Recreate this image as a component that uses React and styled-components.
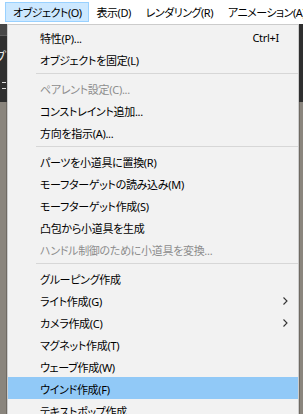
import React from 'react';
import styled, { createGlobalStyle } from 'styled-components';

const GlobalStyle = createGlobalStyle`
  html, body {
    margin: 0;
    padding: 0;
    background: #333333;
    overflow: hidden;
  }
`;

const Screen = styled.div`
  width: 303px;
  height: 414px;
  display: flex;
  flex-direction: column;
  overflow: hidden;
  font-family: "Noto Sans", "Noto Sans CJK JP", sans-serif;
  font-feature-settings: "palt" 1;
  font-size: 11px;
  letter-spacing: -0.3px;
  color: #000000;
`;

const MenuBar = styled.div`
  height: 24px;
  flex: none;
  display: flex;
  align-items: center;
  padding-left: 5px;
  background: #ffffff;
  white-space: nowrap;
  overflow: hidden;
  letter-spacing: -0.5px;
`;

const MenuTitle = styled.div`
  height: 20px;
  box-sizing: border-box;
  display: flex;
  align-items: center;
  padding: 0 6px 0 7px;
  border: 1px solid ${(p) => (p.$open ? '#99d1ff' : 'transparent')};
  background: ${(p) => (p.$open ? '#cce8ff' : 'transparent')};
`;

const Workspace = styled.div`
  flex: 1;
  display: flex;
  min-height: 0;
`;

const SideStrip = styled.div`
  width: ${(p) => p.$width}px;
  flex: none;
  display: flex;
  flex-direction: column;
  overflow: hidden;
`;

const DarkPane = styled.div`
  height: 78px;
  flex: none;
  background: #2f2f2f;
  display: flex;
  flex-direction: column;
  overflow: hidden;
`;

const TabBlock = styled.div`
  height: 11px;
  flex: none;
  background: #474747;
  border-bottom: 1px solid #5e5e5e;
`;

const ClippedGlyph = styled.div`
  margin-top: 12px;
  margin-left: -6px;
  color: #e8e8e8;
  font-size: 13px;
  line-height: 16px;
`;

const Dots = styled.div`
  margin-top: 18px;
  margin-left: 2px;
  width: 4px;
  height: 5px;
  border-top: 1px solid #dddddd;
  border-bottom: 1px solid #dddddd;
`;

const TaupePane = styled.div`
  flex: 1;
  background: #8a857d;
  border-right: ${(p) => (p.$edge ? '1px solid #6f6a63' : 'none')};
  border-left: ${(p) => (p.$edgeLeft ? '1px solid #6f6a63' : 'none')};
`;

const Dropdown = styled.div`
  width: 292px;
  flex: none;
  box-sizing: border-box;
  align-self: flex-start;
  background: #f2f2f2;
  border: 1px solid #cccccc;
  border-bottom: none;
  padding-top: 1px;
  box-shadow: 2px 2px 2px rgba(0, 0, 0, 0.3);
  display: flex;
  flex-direction: column;
`;

const Item = styled.div`
  height: 22px;
  flex: none;
  display: flex;
  align-items: center;
  padding: 1px 0 0 32px;
  box-sizing: border-box;
  white-space: nowrap;
  color: ${(p) => (p.$disabled ? '#8d8d8d' : '#000000')};
  background: ${(p) => (p.$active ? '#91c9f7' : 'transparent')};
`;

const Label = styled.span`
  flex: 1;
`;

const Shortcut = styled.span`
  margin-right: 19px;
`;

const Chevron = styled.svg`
  width: 5px;
  height: 8px;
  margin-right: 10px;
  flex: none;
`;

const Separator = styled.div`
  height: 7px;
  flex: none;
  display: flex;
  align-items: center;
  padding-left: 28px;

  &::after {
    content: '';
    flex: 1;
    height: 1px;
    background: #d7d7d7;
  }
`;

const titles = ['オブジェクト(O)', '表示(D)', 'レンダリング(R)', 'アニメーション(A)'];

const items = [
  { label: '特性(P)...', shortcut: 'Ctrl+I' },
  { label: 'オブジェクトを固定(L)' },
  'sep',
  { label: 'ペアレント設定(C)...', disabled: true },
  { label: 'コンストレイント追加...' },
  { label: '方向を指示(A)...' },
  'sep',
  { label: 'パーツを小道具に置換(R)' },
  { label: 'モーフターゲットの読み込み(M)' },
  { label: 'モーフターゲット作成(S)' },
  { label: '凸包から小道具を生成' },
  { label: 'ハンドル制御のために小道具を変換...', disabled: true },
  'sep',
  { label: 'グルーピング作成' },
  { label: 'ライト作成(G)', submenu: true },
  { label: 'カメラ作成(C)', submenu: true },
  { label: 'マグネット作成(T)' },
  { label: 'ウェーブ作成(W)' },
  { label: 'ウインド作成(F)', active: true },
  { label: 'テキストポップ作成' },
];

function App() {
  return (
    <>
      <GlobalStyle />
      <Screen>
        <MenuBar>
          {titles.map((t, i) => (
            <MenuTitle key={t} $open={i === 0}>{t}</MenuTitle>
          ))}
        </MenuBar>
        <Workspace>
          <SideStrip $width={7}>
            <DarkPane>
              <TabBlock />
              <ClippedGlyph>プ</ClippedGlyph>
              <Dots />
            </DarkPane>
            <TaupePane $edge />
          </SideStrip>
          <Dropdown>
            {items.map((it, i) =>
              it === 'sep' ? (
                <Separator key={i} />
              ) : (
                <Item key={i} $disabled={it.disabled} $active={it.active}>
                  <Label>{it.label}</Label>
                  {it.shortcut && <Shortcut>{it.shortcut}</Shortcut>}
                  {it.submenu && (
                    <Chevron viewBox="0 0 5 8">
                      <polyline points="0.5,0.5 4,4 0.5,7.5" fill="none" stroke="#333333" strokeWidth="1.1" />
                    </Chevron>
                  )}
                </Item>
              )
            )}
          </Dropdown>
          <SideStrip $width={4}>
            <DarkPane />
            <TaupePane $edgeLeft />
          </SideStrip>
        </Workspace>
      </Screen>
    </>
  );
}

export default App;
